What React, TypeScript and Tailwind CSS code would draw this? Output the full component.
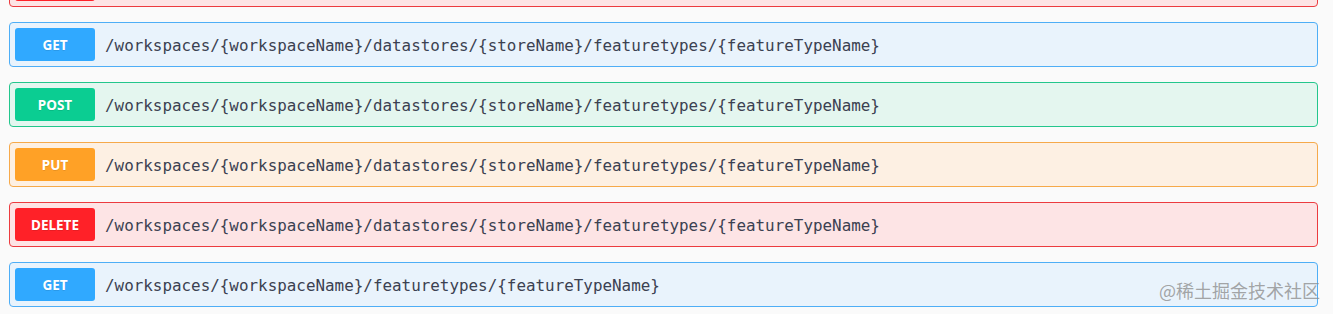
const PATH_FULL = '/workspaces/{workspaceName}/datastores/{storeName}/featuretypes/{featureTypeName}'

type Method = 'GET' | 'POST' | 'PUT' | 'DELETE'

const styles: Record<Method, { block: string; badge: string }> = {
  GET: { block: 'border-[#4eaef6] bg-[#e9f3fc]', badge: 'bg-[#30a9ff]' },
  POST: { block: 'border-[#23c68c] bg-[#e4f6ef]', badge: 'bg-[#0bcd92]' },
  PUT: { block: 'border-[#f6a94a] bg-[#fdf0e3]', badge: 'bg-[#ffa126]' },
  DELETE: { block: 'border-[#ec3b3f] bg-[#fde4e5]', badge: 'bg-[#ff2128]' },
}

const rows: { method: Method; path: string }[] = [
  { method: 'DELETE', path: '/workspaces/{workspaceName}/datastores/{storeName}' },
  { method: 'GET', path: PATH_FULL },
  { method: 'POST', path: PATH_FULL },
  { method: 'PUT', path: PATH_FULL },
  { method: 'DELETE', path: PATH_FULL },
  { method: 'GET', path: '/workspaces/{workspaceName}/featuretypes/{featureTypeName}' },
]

function OpBlock({ method, path }: { method: Method; path: string }) {
  const s = styles[method]
  return (
    <div className={`mb-[15px] flex items-center rounded-[4px] border p-[5px] ${s.block}`}>
      <span
        className={`flex h-[33px] w-[80px] shrink-0 items-center justify-center rounded-[3px] pt-[1px] text-[13.5px] font-bold text-white [text-shadow:0_1px_0_rgba(0,0,0,0.1)] ${s.badge}`}
        style={{ fontFamily: '"Noto Sans", sans-serif' }}
      >
        {method}
      </span>
      <span
        className="px-[10px] pt-[2px] text-[15.9px] font-medium text-[#3b4151]"
        style={{ fontFamily: '"DejaVu Sans Mono", monospace' }}
      >
        {path}
      </span>
    </div>
  )
}

export default function App() {
  return (
    <div className="relative h-[314px] w-[1333px] overflow-hidden bg-[#fafafa]">
      <div className="-mt-[38px] pl-[9px] pr-[15px]">
        {rows.map((r, i) => (
          <OpBlock key={i} method={r.method} path={r.path} />
        ))}
      </div>
      {/* watermark */}
      <span
        className="absolute right-[13px] top-[281px] text-[18px] leading-none text-[#8f8f8f]/80"
        style={{ fontFamily: '"Noto Sans CJK SC", sans-serif' }}
      >
        @稀土掘金技术社区
      </span>
    </div>
  )
}
